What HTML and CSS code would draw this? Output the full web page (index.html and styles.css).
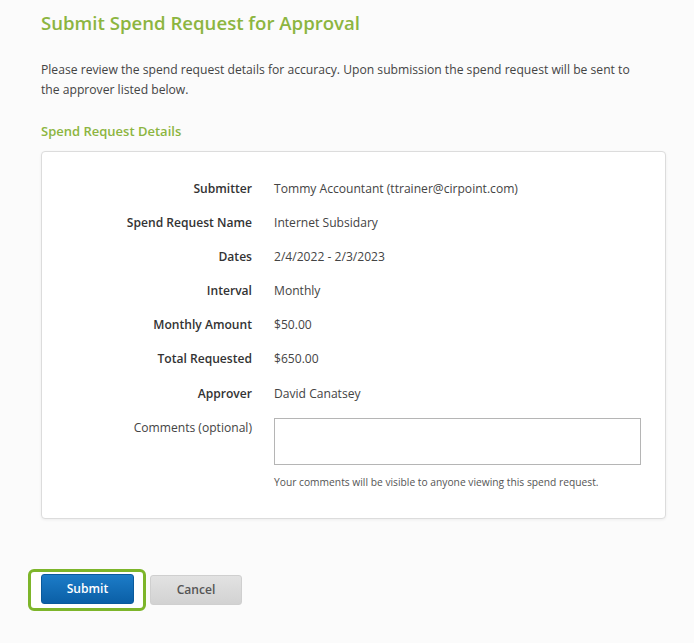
FILE: index.html
```html
<!DOCTYPE html>
<html>
<head>
<meta charset="utf-8">
<link rel="stylesheet" href="styles.css">
</head>
<body>
<div class="page">
  <h1 class="title">Submit Spend Request for Approval</h1>
  <p class="intro">Please review the spend request details for accuracy. Upon submission the spend request will be sent to the approver listed below.</p>
  <h2 class="subtitle">Spend Request Details</h2>
  <div class="card">
    <div class="row"><div class="label">Submitter</div><div class="value">Tommy Accountant (ttrainer@cirpoint.com)</div></div>
    <div class="row"><div class="label">Spend Request Name</div><div class="value">Internet Subsidary</div></div>
    <div class="row"><div class="label">Dates</div><div class="value">2/4/2022 - 2/3/2023</div></div>
    <div class="row"><div class="label">Interval</div><div class="value">Monthly</div></div>
    <div class="row"><div class="label">Monthly Amount</div><div class="value">$50.00</div></div>
    <div class="row"><div class="label">Total Requested</div><div class="value">$650.00</div></div>
    <div class="row"><div class="label">Approver</div><div class="value">David Canatsey</div></div>
    <div class="row comments-row">
      <div class="label light">Comments (optional)</div>
      <div class="value">
        <textarea class="comments"></textarea>
        <div class="help">Your comments will be visible to anyone viewing this spend request.</div>
      </div>
    </div>
  </div>
  <div class="actions">
    <div class="highlight"><button class="btn btn-primary">Submit</button></div>
    <button class="btn btn-default">Cancel</button>
  </div>
</div>
</body>
</html>
```
FILE: styles.css
```css
html, body {
  margin: 0;
  padding: 0;
  background: #fbfbfb;
}
body {
  font-family: "Open Sans", "Liberation Sans", sans-serif;
  color: #444;
}
.page {
  padding: 9px 28px 0 41px;
}
.title {
  margin: 0;
  font-size: 18.6px;
  font-weight: 600;
  line-height: 28px;
  color: #8cb540;
}
.intro {
  margin: 23px 0 0;
  max-width: 600px;
  font-size: 12.15px;
  line-height: 20px;
  color: #444;
}
.subtitle {
  margin: 20px 0 0;
  font-size: 13px;
  font-weight: 600;
  line-height: 22px;
  color: #8cb540;
}
.card {
  margin-top: 9px;
  background: #fff;
  border: 1px solid #dcdcdc;
  border-radius: 4px;
  box-shadow: 0 1px 3px rgba(0,0,0,0.06);
  padding: 27px 0 29px;
}
.row {
  display: grid;
  grid-template-columns: 210px 1fr;
  column-gap: 22px;
  min-height: 34.1px;
  font-size: 12.1px;
  line-height: 20px;
}
.label {
  text-align: right;
  font-weight: 600;
  color: #333;
}
.label.light {
  font-weight: 400;
  color: #444;
}
.value {
  color: #444;
}
.comments {
  display: block;
  box-sizing: border-box;
  width: 367px;
  height: 47px;
  margin: 0;
  border: 1px solid #b5b5b5;
  border-radius: 0;
  resize: none;
  background: #fff;
}
.help {
  margin-top: 10px;
  font-size: 10.25px;
  line-height: 14px;
  color: #555;
}
.actions {
  display: flex;
  align-items: center;
  gap: 4px;
  margin-top: 50px;
  margin-left: -13px;
}
.highlight {
  border: 3px solid #7db52a;
  border-radius: 6px;
  padding: 2px 9px 4px 10px;
  background: #fff;
}
.btn {
  font-family: "Open Sans", "Liberation Sans", sans-serif;
  font-size: 12.1px;
  font-weight: 600;
  height: 30px;
  border-radius: 3px;
  cursor: pointer;
  display: block;
}
.btn-primary {
  width: 93px;
  color: #fff;
  border: 1px solid #0a5a9c;
  background: linear-gradient(#1c7cc8, #0b5fa6);
}
.btn-default {
  width: 92px;
  color: #555;
  border: 1px solid #cfcfcf;
  background: linear-gradient(#e2e2e2, #d2d2d2);
}
```
